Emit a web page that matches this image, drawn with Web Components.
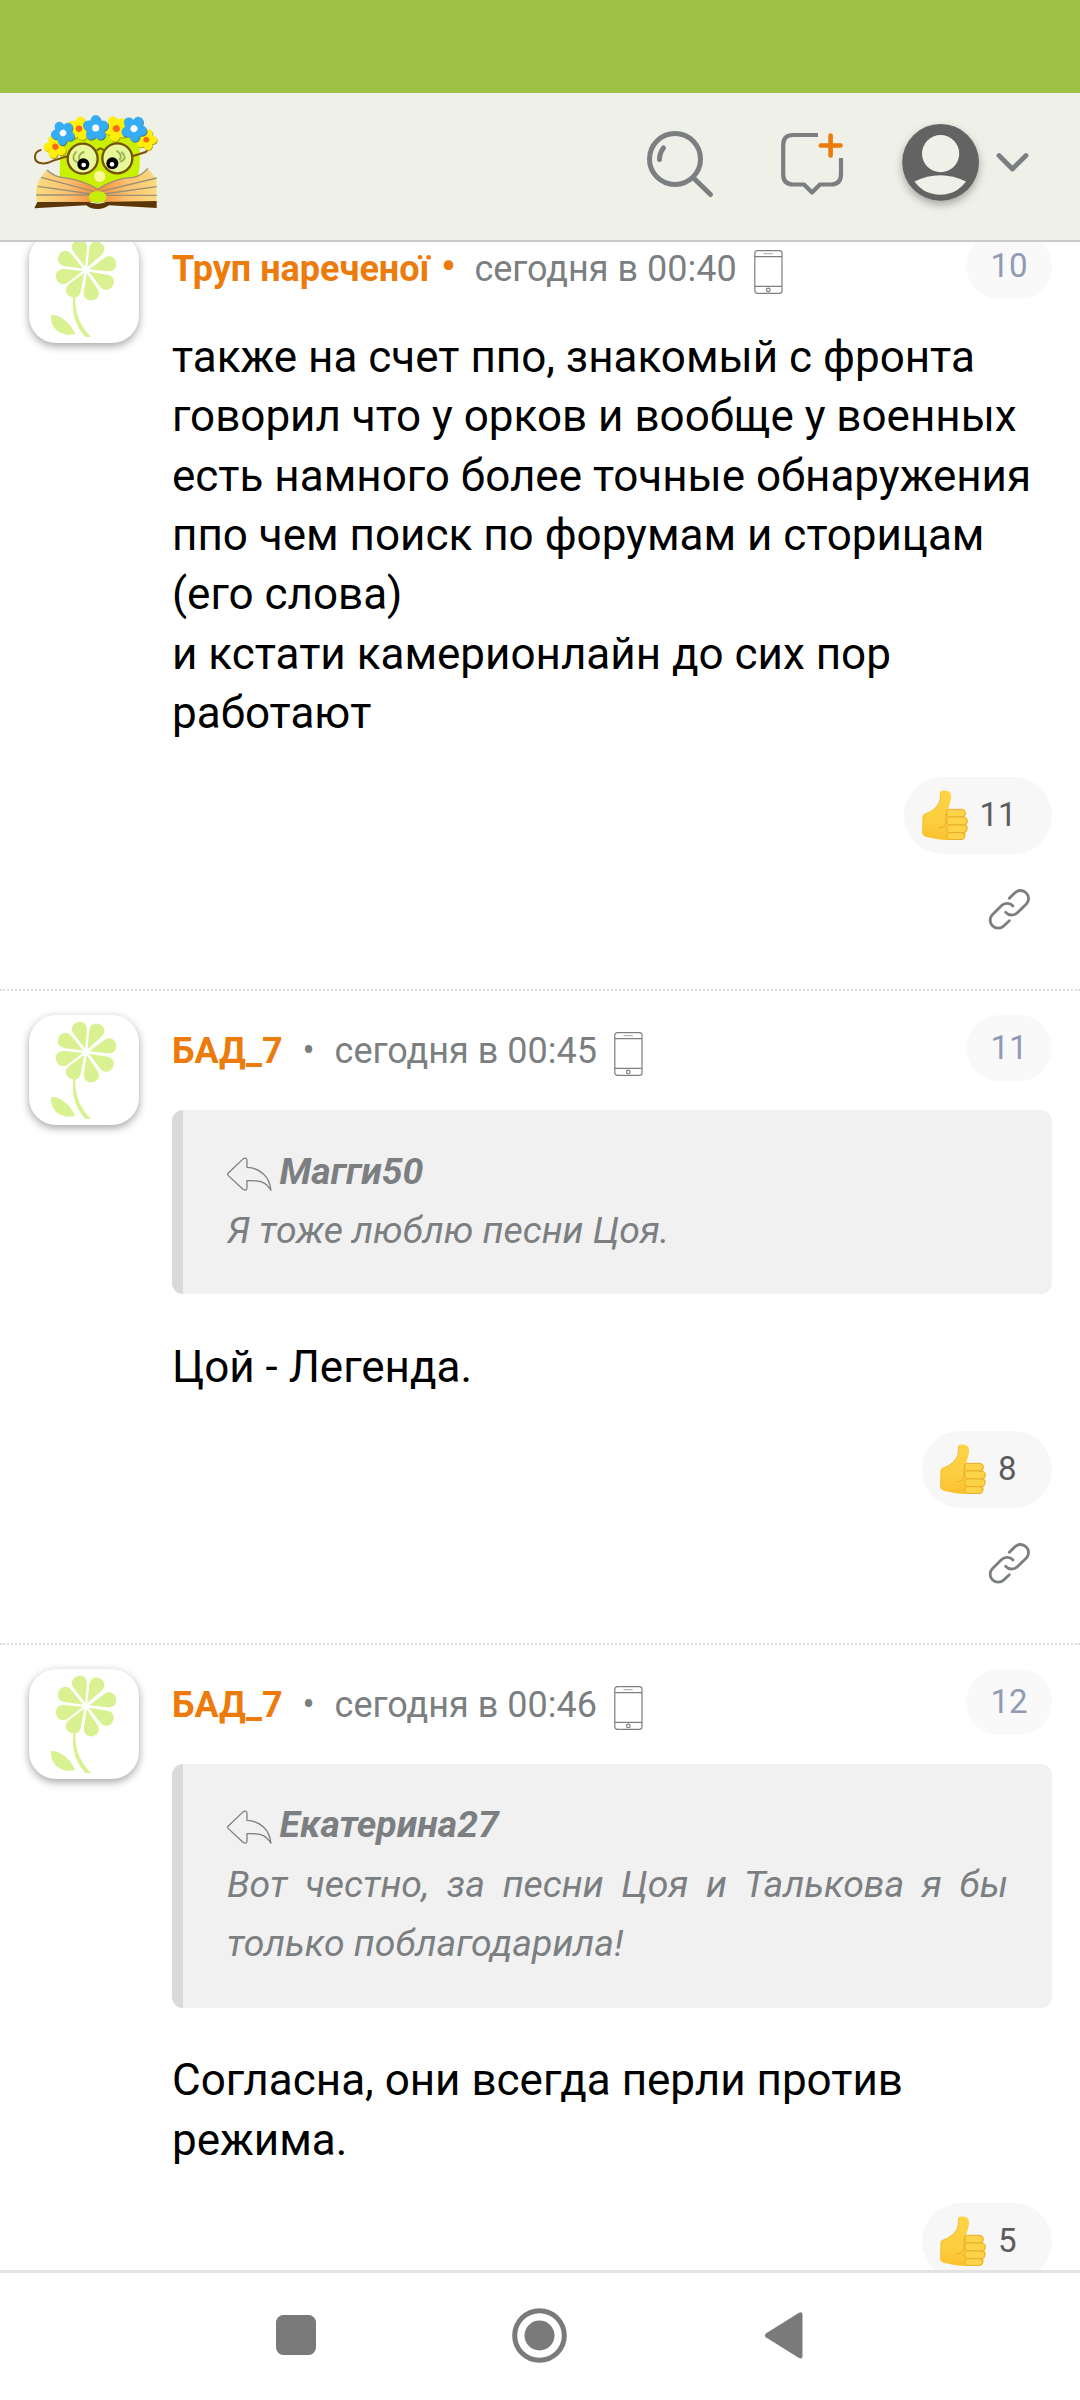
<!DOCTYPE html>
<html lang="ru">
<head>
<meta charset="utf-8">
<title>Форум</title>
<style>
html,body{margin:0;padding:0;background:#fff}
body{font-family:Roboto,"Noto Sans",sans-serif;width:1080px;height:2400px;overflow:hidden}
</style>
</head>
<body>
<forum-app>
  <forum-post author="Труп нареченої" time="сегодня в 00:40" number="10" likes="11" joined>также на счет ппо, знакомый с фронта говорил что у орков и вообще у военных есть намного более точные обнаружения ппо чем поиск по форумам и сторицам (его слова)<br>и кстати камерионлайн до сих пор работают</forum-post>
  <forum-post author="БАД_7" time="сегодня в 00:45" number="11" likes="8"><post-quote slot="quote" author="Магги50">Я тоже люблю песни Цоя.</post-quote>Цой - Легенда.</forum-post>
  <forum-post author="БАД_7" time="сегодня в 00:46" number="12" likes="5"><post-quote slot="quote" author="Екатерина27">Вот честно, за песни Цоя и Талькова я бы только поблагодарила!</post-quote>Согласна, они всегда перли против режима.</forum-post>
</forum-app>
<script>
class Base extends HTMLElement{
  constructor(){super();this.attachShadow({mode:'open'})}
  connectedCallback(){this.shadowRoot.innerHTML=this.view()}
  a(n){return this.getAttribute(n)||''}
}

customElements.define('site-logo',class extends Base{view(){
  const flower=(x,y,r,k,c,s,m)=>`<g transform="translate(${x} ${y}) rotate(${r}) scale(${k})"><g fill="${s}" transform="rotate(${-r}) translate(2 3) rotate(${r})">${petals}</g><g fill="${c}">${petals}</g><circle r="10" fill="${m}"/></g>`;
  const petals=[0,72,144,216,288].map(d=>`<ellipse cy="-20" rx="15" ry="17.5" transform="rotate(${d})"/>`).join('');
  const Y='#ffee0a',YS='#a89a10',B='#35adf5',BS='#4b7d92',W='#fff',O='#f96a14';
  return `<style>:host{display:block;width:126px;height:98px}svg{display:block;overflow:visible}</style>
<svg width="126" height="98" viewBox="40 66 378 294">
<defs>
<linearGradient id="p" x1="0" x2="1"><stop offset="0" stop-color="#f9dc7e"/><stop offset=".5" stop-color="#fbc171"/><stop offset="1" stop-color="#f58b36"/></linearGradient>
<linearGradient id="q" x1="1" x2="0"><stop offset="0" stop-color="#f9dc7e"/><stop offset=".5" stop-color="#fbc171"/><stop offset="1" stop-color="#f58b36"/></linearGradient>
</defs>
<path d="M122 150Q240 120 360 150V225L356 262L234 300L120 262Z" fill="#c9f000"/>
<path d="M63 180C50 183 45 194 46 204C49 224 78 224 101 212L145 198M340 198L378 186L386 178" fill="none" stroke="#7d5209" stroke-width="6" stroke-linecap="round"/>
<path d="M53 336L200 333Q215 341 234 341Q252 341 262 333L411 333V354L268 346Q254 357 234 357Q210 357 200 346L44 355Z" fill="#5a3608"/>
<path d="M82 240Q104 258 130 262Q190 270 234 300V336L50 335V290Q60 262 82 240Z" fill="url(#p)"/>
<path d="M384 235Q366 258 340 262Q280 264 234 300V336L411 333V268Z" fill="url(#q)"/>
<path d="M82 240Q104 260 130 263Q190 270 234 298Q284 264 340 262Q366 258 384 235M64 262L222 304M55 289L216 312M50 315H214M411 264L244 304M411 290L252 312M411 316H256" fill="none" stroke="#9a9078" stroke-width="4"/>
<ellipse cx="234" cy="321" rx="27" ry="18" fill="#c8ec0c"/>
<circle cx="240" cy="259" r="17" fill="#fbf79b"/>
${flower(178,116,10,.98,Y,YS,O)}${flower(107,170,-20,.95,Y,YS,O)}${flower(290,116,-25,1.05,Y,YS,O)}${flower(380,149,20,.86,Y,YS,O)}
${flower(130,129,-30,.98,B,BS,W)}${flower(228,114,0,1.05,B,BS,W)}${flower(343,116,32,1.05,B,BS,W)}
<path d="M232 182Q242 170 252 181" fill="none" stroke="#7a5907" stroke-width="6"/>
<g fill="#e6f89a" stroke="#755106" stroke-width="7"><circle cx="189" cy="206" r="45"/><circle cx="293" cy="205" r="45"/></g>
<g fill="none" stroke="#9fb252" stroke-width="6" stroke-linecap="round"><path d="M169 186Q150 210 178 218M192 186Q172 194 180 214M292 183Q310 196 300 208M307 187Q325 207 302 215"/></g>
<circle cx="191" cy="223" r="18"/><circle cx="278" cy="220" r="18"/><circle cx="192" cy="225" r="7" fill="#fff"/><circle cx="277" cy="223" r="7" fill="#fff"/>
</svg>`}});

customElements.define('site-header',class extends Base{view(){return `<style>
:host{display:flex;align-items:flex-start;height:147px;background:#eff0e8;border-bottom:2px solid #c9cbc8;padding:0 50px 0 33px;box-sizing:content-box;flex:none}
site-logo{margin:19px auto 0 0}
svg{display:block;margin-top:27px;flex:none;overflow:visible;fill:none;stroke:#7b7f81;stroke-width:5;stroke-linecap:round;stroke-linejoin:round}
.s{margin-right:66px}.m{margin-right:50px}.u{margin-right:8px;stroke:none;filter:drop-shadow(0 4px 4px rgba(0,0,0,.3))}
</style>
<site-logo></site-logo>
<svg class="s" width="68" height="90" viewBox="645 120 68 90"><circle cx="675" cy="159" r="25.5"/><path d="M693.5 178L710.5 194.5M663.5 148Q659.5 153 659.5 159.5"/></svg>
<svg class="m" width="66" height="90" viewBox="779 120 66 90"><path stroke-width="4.2" stroke-linecap="butt" d="M818 135H793Q783.2 135 783.2 145V174Q783.2 184.5 793 184.5H804L812 192.5L820 184.5H831Q841 184.5 841 174V158"/><path stroke="#ec7b0b" stroke-width="4.6" d="M830.6 135.5V155.5M820.8 145.5H840.5"/></svg>
<svg class="u" width="92" height="90" viewBox="895 120 92 90"><circle cx="940.6" cy="162.3" r="38.4" fill="#636363"/><circle cx="940.6" cy="153.6" r="18.6" fill="#eff0e8"/><path fill="#eff0e8" d="M914.5 181.5Q940 169 966 181.5Q956 194.7 940.5 194.7Q924 194.7 914.5 181.5Z"/></svg>
<svg width="35" height="90" viewBox="995 120 35 90"><path stroke-width="4.8" d="M999 155.5L1012.4 169L1026 155.5"/></svg>`}});

customElements.define('user-avatar',class extends Base{view(){
  const p=[-16,27,75,121,167,212,254,299].map(d=>`<path d="M0-10L-20-60C-28-80-16-93 0-93S28-80 20-60Z" transform="translate(258 216) rotate(${d})"/>`).join('');
  return `<style>:host{display:block;width:110px;height:110px;border-radius:27px;background:#fff;box-shadow:0 3px 8px rgba(0,0,0,.36);flex:none}svg{display:block}</style>
<svg width="110" height="110" viewBox="87 105 330 330" fill="#d8f291">${p}<path d="M220 297C214 345 226 385 256 417L273 416C240 385 224 345 226 297Z"/><path d="M153 351C175 348 208 368 226 408C190 417 150 398 153 351Z"/></svg>`}});

customElements.define('like-pill',class extends Base{view(){return `<style>
:host{display:flex;align-items:flex-start;height:77px;border-radius:39px;background:#f7f7f7;padding:0 35.5px 0 18px;box-sizing:border-box;font-size:33px;color:#5c5c5c}
svg{display:block;margin:13px 11.5px 0 0}.n{padding-top:2px;line-height:72px}</style>
<svg width="46" height="50" viewBox="186 150 138 150">
<defs><linearGradient id="g" x1="0" y1="0" x2="0" y2="1"><stop offset="0" stop-color="#fdd344"/><stop offset=".6" stop-color="#fdcf40"/><stop offset="1" stop-color="#fbc02d"/></linearGradient></defs>
<path d="M240 156C246 150 262 150 270 158C278 168 270 190 263 212L305 207C319 209 319 225 314 230C326 234 325 250 319 254C327 260 322 274 316 278C319 290 313 300 303 300Q240 302 212 293Q190 291 187 281V229Q188 223 197 220Q222 212 236 190Q241 181 240 156Z" fill="url(#g)"/>
<path d="M242 157Q242 181 236 191Q222 213 197 222Q188 226 188 281" fill="none" stroke="#efb435" stroke-width="2"/>
<g fill="#fdd448" stroke="#e9ac2d" stroke-width="3"><path d="M266 208H305Q316 209 316 219T305 231H267Q260 230 260 219T266 208Z"/><path d="M266 231H309Q322 232 322 243T310 255H267Q260 254 260 243T266 231Z"/><path d="M266 255H309Q322 256 321 267T309 278H267Q260 277 260 267T266 255Z"/><path d="M266 278H304Q315 280 314 289T303 299H268Q261 298 260 289T266 278Z"/></g>
<path d="M260 212Q256 240 259 249Q252 264 236 263" fill="none" stroke="#e9ac2d" stroke-width="3"/>
</svg><span class="n">${this.a('count')}</span>`}});

customElements.define('post-quote',class extends Base{view(){return `<style>
:host{display:block;box-sizing:border-box;background:#f1f1f1;border-left:11px solid #dadada;border-radius:11px;padding:31.8px 44px 34px;font-size:37.4px;line-height:59.4px;font-style:italic;color:#7b7f81;text-align:justify;margin:2px 0 42px}
.w{display:flex;align-items:flex-start;gap:8px;font-weight:700}
svg{display:block;margin-top:15px}</style>
<div class="w"><svg width="44.6" height="34.3" viewBox="200 470 134 103" fill="none" stroke="#7b7f81" stroke-width="3.8" stroke-linejoin="round"><path d="M204 518L247 477Q259 468 260 480V501C298 503 328 528 332 570C316 542 296 540 260 541V563Q259 574 248 567L204 526Q200 522 204 518Z"/></svg><span>${this.a('author')}</span></div><div><slot></slot></div>`}});

customElements.define('forum-post',class extends Base{view(){const j=this.hasAttribute('joined');return `<style>
:host{display:flex;align-items:flex-start;gap:33px;padding:24px 28px 58.2px 29px;border-bottom:2px dotted #dcdcdc;flex:none}
.col{flex:1;min-width:0}
.head{display:flex;align-items:flex-start;height:93px;font-size:36px;line-height:66px;color:#7b7f81;white-space:nowrap}
.name,.dot,time{padding-top:3px}
.name{color:#ec7b0b;font-weight:700}
.dot{width:52px;text-align:center}
.dot.j{color:#ec7b0b;font-weight:700;width:45px;text-indent:-7px;font-size:40px;padding-top:1px}
.head svg{margin:17px 0 0 17px}
.num{margin-left:auto;width:86px;height:66px;border-radius:33px;background:#f9f9f9;color:#8f9bb3;font-size:33px;text-align:center}
.text{font-size:44px;line-height:59.4px;color:#000;padding-top:1.8px}
.foot{display:flex;flex-direction:column;align-items:flex-end;margin-top:33.2px}
.foot svg{margin:34px 21.7px 0 0}
svg{display:block}
</style>
<user-avatar></user-avatar>
<div class="col">
<div class="head"><span class="name">${this.a('author')}</span><span class="dot${j?' j':''}">•</span><time>${this.a('time')}</time>
<svg width="29" height="44" viewBox="0 0 29 44" fill="none" stroke="#7b7f81" stroke-width="1.2"><rect x=".8" y=".7" width="27.2" height="42.6" rx="2.6"/><path d="M.8 6.6H28M.8 36.4H28"/><path d="M9.5 3.6H18.8" stroke-opacity=".6"/><circle cx="14.3" cy="39.9" r="1.8"/></svg>
<span class="num">${this.a('number')}</span></div>
<slot name="quote"></slot>
<div class="text"><slot></slot></div>
<div class="foot"><like-pill count="${this.a('likes')}"></like-pill>
<svg width="42.7" height="42.7" viewBox="383 443 128 128" fill="none" stroke="#7b7f81" stroke-width="8.5" stroke-linecap="round"><path d="M447 474L463 458A24 24 0 0 1 498 491L471 517A24 24 0 0 1 436 516"/><path d="M447 541L431 556A24 24 0 0 1 396 523L423 496A24 24 0 0 1 458 497"/></svg></div>
</div>`}});

customElements.define('system-nav',class extends Base{view(){return `<style>
:host{display:flex;align-items:center;box-sizing:border-box;height:130px;border-top:3px solid #e2e2e2;padding:0 0 3px 275.5px;background:#fff;flex:none}
svg{display:block;fill:#7a7a7a}.home{margin-left:196.5px}.back{margin-left:197.5px}</style>
<svg width="40" height="40"><rect width="40" height="40" rx="7.5"/></svg>
<svg class="home" width="55" height="55" viewBox="0 0 55 55"><circle cx="27.5" cy="27.5" r="24.8" fill="none" stroke="#7a7a7a" stroke-width="5"/><circle cx="27.5" cy="27.5" r="15"/></svg>
<svg class="back" width="38" height="47" viewBox="0 0 38 47"><path d="M.8 21.6L34 .8Q37.5-.6 37.5 2.6V44.2Q37.5 47.4 34 46L.8 25.2Q-.7 23.4.8 21.6Z"/></svg>`}});

customElements.define('forum-app',class extends Base{view(){return `<style>
:host{display:flex;flex-direction:column;width:1080px;height:2400px;background:#fff}
.status{height:93px;background:#9dc045;flex:none}
.feed{flex:1;min-height:0;overflow:hidden}
.scroll{display:flex;flex-direction:column;margin-top:-33px}
</style>
<div class="status"></div><site-header></site-header>
<div class="feed"><div class="scroll"><slot></slot></div></div>
<system-nav></system-nav>`}});
</script>
</body>
</html>
